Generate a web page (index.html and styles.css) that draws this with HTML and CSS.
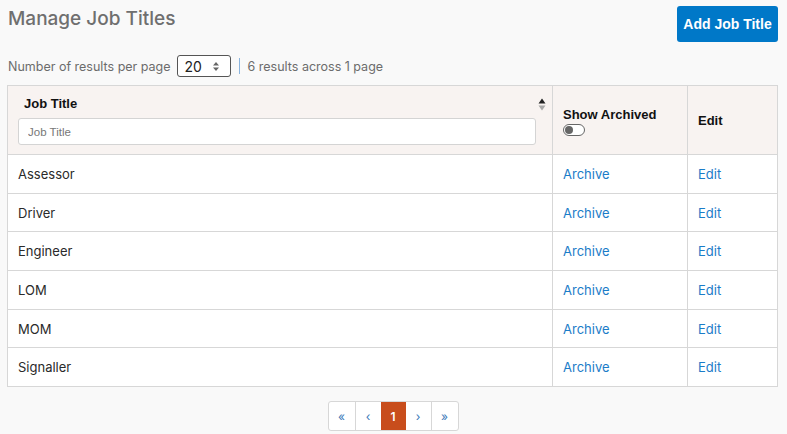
FILE: index.html
```html
<!DOCTYPE html>
<html>
<head>
<meta charset="utf-8">
<link rel="stylesheet" href="styles.css">
</head>
<body>
<div class="page">
  <div class="top">
    <h1 class="title">Manage Job Titles</h1>
    <button class="btn-add">Add Job Title</button>
  </div>
  <div class="perpage">
    <span>Number of results per page</span>
    <span class="select">20
      <svg width="8" height="11" viewBox="0 0 8 11"><path d="M4 1 L7 4.5 H1 Z M4 10 L7 6.5 H1 Z" fill="#666"/></svg>
    </span>
    <span class="sep"></span>
    <span>6 results across 1 page</span>
  </div>
  <table class="grid">
    <thead>
      <tr>
        <th class="c-title">
          <div class="th-row">
            <span class="th-label">Job Title</span>
            <svg class="sort" width="8" height="13" viewBox="0 0 8 13"><path d="M4 0.5 L7.5 5.5 H0.5 Z" fill="#222"/><path d="M4 12.5 L7.5 7.5 H0.5 Z" fill="#a8a8a8"/></svg>
          </div>
          <input class="filter" placeholder="Job Title">
        </th>
        <th class="c-arch">
          <div class="th-label">Show Archived</div>
          <span class="toggle"><span class="knob"></span></span>
        </th>
        <th class="c-edit"><span class="th-label">Edit</span></th>
      </tr>
    </thead>
    <tbody>
      <tr><td>Assessor</td><td><a>Archive</a></td><td><a>Edit</a></td></tr>
      <tr><td>Driver</td><td><a>Archive</a></td><td><a>Edit</a></td></tr>
      <tr><td>Engineer</td><td><a>Archive</a></td><td><a>Edit</a></td></tr>
      <tr><td>LOM</td><td><a>Archive</a></td><td><a>Edit</a></td></tr>
      <tr><td>MOM</td><td><a>Archive</a></td><td><a>Edit</a></td></tr>
      <tr><td>Signaller</td><td><a>Archive</a></td><td><a>Edit</a></td></tr>
    </tbody>
  </table>
  <div class="pager-wrap">
    <div class="pager">
      <span class="pg">«</span>
      <span class="pg">‹</span>
      <span class="pg active">1</span>
      <span class="pg">›</span>
      <span class="pg">»</span>
    </div>
  </div>
</div>
</body>
</html>
```
FILE: styles.css
```css
html, body {
  margin: 0;
  padding: 0;
  background: #f9f9f9;
}
body {
  font-family: Inter, "Liberation Sans", sans-serif;
  color: #212529;
}
.page {
  padding: 6px 9px 0 7px;
}
.top {
  display: flex;
  justify-content: space-between;
  align-items: flex-start;
}
.title {
  margin: 1px 0 0 1px;
  font-size: 19px;
  font-weight: 500;
  color: #6f6f6f;
  line-height: 24px;
}
.btn-add {
  width: 101px;
  height: 36px;
  background: #0078c8;
  color: #fff;
  border: none;
  border-radius: 3px;
  font-family: "Liberation Sans", Arial, sans-serif;
  font-weight: bold;
  font-size: 14px;
  padding: 0;
}
.perpage {
  display: flex;
  align-items: center;
  margin-top: 13px;
  font-size: 12.5px;
  color: #6c6c6c;
  height: 22px;
}
.perpage > span:first-child { margin-left: 1px; }
.select {
  display: inline-flex;
  align-items: center;
  justify-content: space-between;
  box-sizing: border-box;
  width: 54px;
  height: 22px;
  margin-left: 6px;
  padding: 0 10px 0 7px;
  border: 1px solid #555;
  border-radius: 3px;
  background: #fff;
  color: #222;
  font-size: 14px;
}
.sep {
  width: 1px;
  height: 16px;
  background: #8ab4de;
  margin: 0 8px 0 8px;
}
.grid {
  margin-top: 8px;
  width: 771px;
  border-collapse: collapse;
  background: #fff;
  font-size: 13px;
}
.grid th, .grid td {
  border: 1px solid #d7d7d7;
  text-align: left;
}
.grid thead th {
  background: #f8f3f1;
  height: 69px;
  box-sizing: border-box;
  vertical-align: middle;
  font-family: "Liberation Sans", Arial, sans-serif;
}
.th-label {
  font-weight: bold;
  font-size: 13px;
  color: #111;
}
.c-title {
  width: 545px;
  padding: 0 16px 0 10px;
}
.th-row {
  display: flex;
  justify-content: space-between;
  align-items: center;
  padding-left: 6px;
  margin-right: -10px;
  height: 16px;
  margin-top: 0;
}
.sort { margin-top: 3px; }
.filter {
  display: block;
  box-sizing: border-box;
  width: 100%;
  height: 27px;
  margin-top: 7px;
  border: 1px solid #d4d4d4;
  border-radius: 3px;
  padding: 0 9px;
  font-family: "Liberation Sans", Arial, sans-serif;
  font-size: 11.5px;
  background: #fff;
}
.filter::placeholder { color: #777; }
.c-arch {
  width: 135px;
  padding: 0 10px;
}
.c-arch .th-label { margin-top: 2px; }
.toggle {
  display: block;
  position: relative;
  box-sizing: border-box;
  width: 22px;
  height: 12px;
  border: 1px solid #666;
  border-radius: 6px;
  margin-top: 2px;
  background: #fff;
}
.knob {
  position: absolute;
  left: 1px;
  top: 1px;
  width: 8px;
  height: 8px;
  border-radius: 50%;
  background: #666;
}
.c-edit {
  padding: 0 10px;
}
.grid tbody td {
  height: 38.7px;
  box-sizing: border-box;
  padding: 0 10px;
  color: #2a2a2a;
}
.grid tbody td a {
  color: #1b7cc8;
}
.pager-wrap {
  display: flex;
  justify-content: center;
  margin-top: 14px;
  padding-left: 1px;
}
.pager {
  display: flex;
  border: 1px solid #d7d7d7;
  border-radius: 3px;
  background: #fff;
  height: 28px;
}
.pg {
  display: flex;
  align-items: center;
  justify-content: center;
  width: 25px;
  font-size: 12px;
  color: #3a79b8;
  border-left: 1px solid #d7d7d7;
}
.pg:first-child { border-left: none; }
.pg.active {
  background: #c84d1c;
  color: #fff;
  border-left: none;
  font-weight: 600;
}
.pg.active + .pg { border-left: none; }
.pg:first-child, .pg:last-child { width: 26px; }
```
